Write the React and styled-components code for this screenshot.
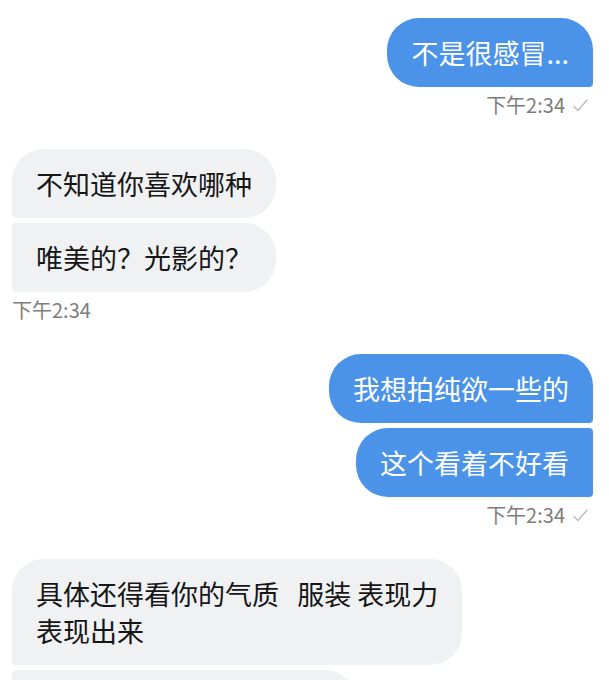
import React from "react";
import styled, { createGlobalStyle, css } from "styled-components";

const Global = createGlobalStyle`
  html, body { margin: 0; padding: 0; background: #ffffff; }
  body { font-family: "Noto Sans CJK SC", "Noto Sans", sans-serif; overflow: hidden; }
`;

const Page = styled.div`
  width: 609px;
  height: 680px;
  box-sizing: border-box;
  padding: 18px 16px 0 12px;
  display: flex;
  flex-direction: column;
  gap: 32px;
  overflow: hidden;
`;

const Group = styled.div`
  display: flex;
  flex-direction: column;
  align-items: ${(p) => (p.$out ? "flex-end" : "flex-start")};
  gap: 5px;
`;

const R = 32;
const S = 4;

const Bubble = styled.div`
  box-sizing: border-box;
  padding: 16px 24px;
  font-size: 27px;
  line-height: 37px;
  white-space: pre;
  min-height: 69px;
  width: ${(p) => (p.$w ? `${p.$w}px` : "auto")};
  ${(p) =>
    p.$out
      ? css`
          background: #4a93e8;
          color: #ffffff;
          border-radius: ${R}px ${p.$first ? R : S}px ${S}px ${R}px;
        `
      : css`
          background: #f0f1f3;
          color: #161616;
          border-radius: ${p.$first ? R : S}px ${R}px ${R}px ${S}px;
        `}
`;

const Stamp = styled.div`
  display: flex;
  align-items: center;
  gap: 8px;
  margin-top: 1px;
  padding-right: ${(p) => (p.$out ? "5px" : "0")};
  font-size: 20px;
  line-height: 24px;
  color: #7d7d7d;
`;

const Check = () => (
  <svg width="15" height="13" viewBox="0 0 15 13" fill="none">
    <polyline points="1,7.5 5,11.5 14,1" stroke="#b8b8b8" strokeWidth="1.2" strokeLinecap="round" strokeLinejoin="round" />
  </svg>
);

const groups = [
  { out: true, msgs: [{ t: "不是很感冒..." }], time: "下午2:34" },
  { out: false, msgs: [{ t: "不知道你喜欢哪种" }, { t: "唯美的？光影的？" }], time: "下午2:34" },
  { out: true, msgs: [{ t: "我想拍纯欲一些的" }, { t: "这个看着不好看" }], time: "下午2:34" },
  { out: false, msgs: [{ t: "具体还得看你的气质   服装 表现力\n表现出来" }, { t: "", w: 345 }] },
];

export default function App() {
  return (
    <>
      <Global />
      <Page>
        {groups.map((g, gi) => (
          <Group key={gi} $out={g.out}>
            {g.msgs.map((m, mi) => (
              <Bubble key={mi} $out={g.out} $first={mi === 0} $w={m.w}>
                {m.t}
              </Bubble>
            ))}
            {g.time && (
              <Stamp $out={g.out}>
                <span>{g.time}</span>
                {g.out && <Check />}
              </Stamp>
            )}
          </Group>
        ))}
      </Page>
    </>
  );
}
